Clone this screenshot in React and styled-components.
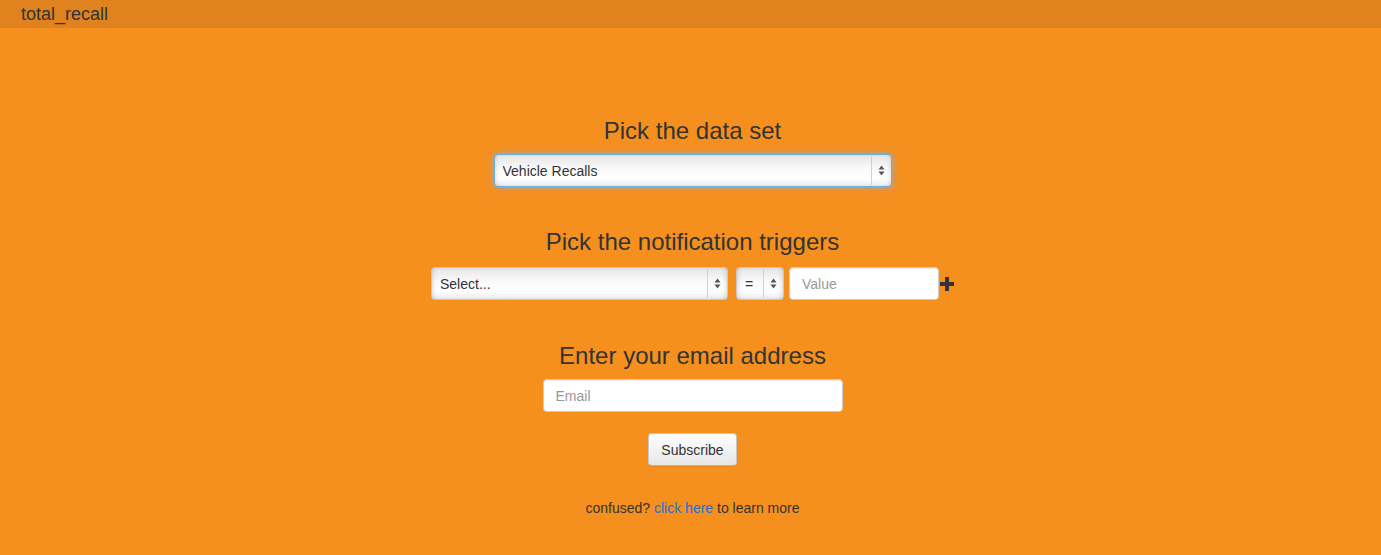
import React from 'react';
import styled, {createGlobalStyle} from 'styled-components';

const Global=createGlobalStyle`
html,body{margin:0;padding:0;}
body{
 background:#f5901f;
 font-family:"Liberation Sans",Arial,sans-serif;
 color:#333;
 font-size:14px;
}
`

const TopBar=styled.div`
height:28px;
background:#e0821d;
display:flex;
align-items:center;
padding-left:21px;
font-size:18px;
color:#333;
`

const Main=styled.div`
display:flex;
flex-direction:column;
align-items:center;
padding-top:88px;
padding-left:4px;
`

const Section=styled.div`
display:flex;
flex-direction:column;
align-items:center;
margin-bottom:${p=>p.gap||40}px;
`

const Heading=styled.h3`
margin:0 0 8px;
font-size:24px;
font-weight:normal;
line-height:30px;
color:#333;
`

const SelectWrap=styled.div`
position:relative;
width:${p=>p.w}px;
height:33px;
`

const Select=styled.select`
appearance:none;
-webkit-appearance:none;
width:100%;
height:100%;
box-sizing:border-box;
padding:0 24px 0 8px;
font-family:"Liberation Sans",Arial,sans-serif;
font-size:14px;
color:#333;
border-radius:4px;
border:1px solid ${p=>p.focus?'#6ab0e6':'#c9c9c9'};
background:linear-gradient(#e6e6e6,#fafafa 45%,#ffffff 75%,#ececec);
box-shadow:${p=>p.focus
 ?'0 0 6px rgba(120,180,240,.9), inset 3px 0 4px -2px rgba(0,0,0,.12), inset -3px 0 4px -2px rgba(0,0,0,.12)'
 :'inset 3px 0 4px -2px rgba(0,0,0,.15), inset -3px 0 4px -2px rgba(0,0,0,.15)'};
outline:none;
`

const Arrows=styled.div`
position:absolute;
top:2px;
bottom:2px;
right:1px;
width:19px;
border-left:1px solid #d0d0d0;
display:flex;
align-items:center;
justify-content:center;
pointer-events:none;
`

const Row=styled.div`
display:flex;
align-items:center;
margin-top:2px;
`

const Gap=styled.span`
display:inline-block;
width:${p=>p.w}px;
`

const Input=styled.input`
box-sizing:border-box;
width:${p=>p.w}px;
height:33px;
padding:0 12px;
border:1px solid #ccc;
border-radius:4px;
background:#fff;
font-family:"Liberation Sans",Arial,sans-serif;
font-size:14px;
color:#333;
box-shadow:inset 0 1px 1px rgba(0,0,0,.075);
outline:none;
&::placeholder{color:#999;}
`

const Button=styled.button`
width:89px;
height:33px;
border:1px solid #c8c8c8;
border-bottom-color:#b3b3b3;
border-radius:4px;
background:linear-gradient(#ffffff,#e6e6e6);
font-family:"Liberation Sans",Arial,sans-serif;
font-size:14px;
color:#333;
box-shadow:inset 0 1px 0 rgba(255,255,255,.2),0 1px 2px rgba(0,0,0,.05);
margin-bottom:34px;
`

const Footer=styled.p`
margin:0;
font-size:14px;
color:#333;
a{color:#1e6fd8;text-decoration:none;}
`

const UpDown=()=>(
 <svg width="7" height="11" viewBox="0 0 7 11">
  <path d="M3.5 0.5L6.5 4.5H0.5Z" fill="#555"/>
  <path d="M3.5 10.5L6.5 6.5H0.5Z" fill="#555"/>
 </svg>
)

const PlusIcon=()=>(
 <svg width="14" height="14" viewBox="0 0 14 14">
  <path d="M5 0H9V5H14V9H9V14H5V9H0V5H5Z" fill="#333"/>
 </svg>
)

const FakeSelect=({w,focus,children})=>(
 <SelectWrap w={w}>
  <Select focus={focus?1:0}>{children}</Select>
  <Arrows><UpDown/></Arrows>
 </SelectWrap>
)

const App=()=>{
 return (
  <>
   <Global/>
   <TopBar>total_recall</TopBar>
   <Main>
    <Section gap={40}>
     <Heading>Pick the data set</Heading>
     <FakeSelect w={398} focus>
      <option>Vehicle Recalls</option>
     </FakeSelect>
    </Section>

    <Section gap={41}>
     <Heading>Pick the notification triggers</Heading>
     <Row>
      <FakeSelect w={297}>
       <option>Select...</option>
      </FakeSelect>
      <Gap w={8}/>
      <FakeSelect w={48}>
       <option>=</option>
      </FakeSelect>
      <Gap w={5}/>
      <Input w={150} placeholder="Value"/>
      <Gap w={1}/>
      <PlusIcon/>
     </Row>
    </Section>

    <Section gap={21}>
     <Heading>Enter your email address</Heading>
     <Input w={300} placeholder="Email"/>
    </Section>

    <Button>Subscribe</Button>

    <Footer>confused? <a href="#">click here</a> to learn more</Footer>
   </Main>
  </>
 )
}

export default App;
